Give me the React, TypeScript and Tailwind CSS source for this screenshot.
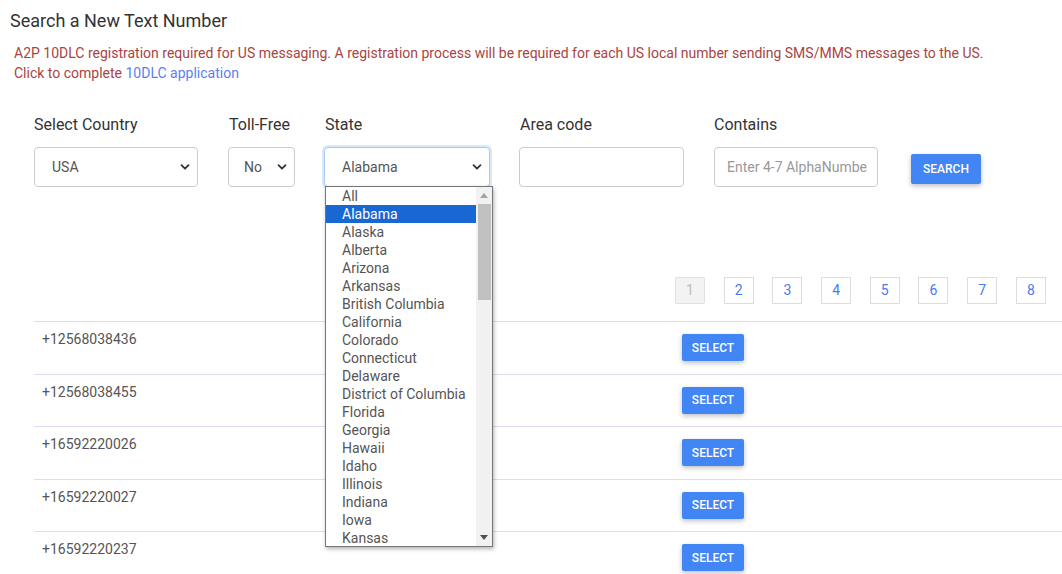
import React from 'react';

const states = [
  'All', 'Alabama', 'Alaska', 'Alberta', 'Arizona', 'Arkansas', 'British Columbia', 'California',
  'Colorado', 'Connecticut', 'Delaware', 'District of Columbia', 'Florida', 'Georgia', 'Hawaii',
  'Idaho', 'Illinois', 'Indiana', 'Iowa', 'Kansas',
];

const numbers = ['+12568038436', '+12568038455', '+16592220026', '+16592220027', '+16592220237'];

const Chevron: React.FC = () => (
  <svg className="w-[10px] h-[10px]" viewBox="0 0 10 10" fill="none">
    <path d="M1.5 3.2 5 6.7 8.5 3.2" stroke="#333" strokeWidth={1.8} strokeLinecap="round" strokeLinejoin="round" />
  </svg>
);

const FakeSelect: React.FC<{ value: string; width: string; focused?: boolean; pad?: string }> = ({ value, width, focused, pad = 'pl-[17px]' }) => (
  <div
    className={`${width} h-[40px] flex items-center justify-between ${pad} pr-[7px] rounded-[4px] bg-white text-[14px] text-[#555] border ${
      focused ? 'border-[#a9c8f5] shadow-[0_0_0_2px_rgba(150,190,245,0.35)]' : 'border-[#ccc]'
    }`}
  >
    <span>{value}</span>
    <Chevron />
  </div>
);

const App: React.FC = () => {
  return (
    <div className="w-[1062px] h-[574px] overflow-hidden bg-white relative" style={{ fontFamily: 'Roboto, "Liberation Sans", sans-serif' }}>
      <h1 className="pl-[10px] pt-[9px] text-[18px] leading-[24px] text-[#333] font-normal">Search a New Text Number</h1>

      <div className="pl-[14px] pt-[10px] text-[14px] leading-[20px] text-[#a94442]">
        <p>A2P 10DLC registration required for US messaging. A registration process will be required for each US local number sending SMS/MMS messages to the US.</p>
        <p>
          Click to complete <a className="text-[#5a7ff0]">10DLC application</a>
        </p>
      </div>

      {/* Search form */}
      <div className="flex items-start pl-[34px] pt-[32px]">
        <div className="w-[194px]">
          <div className="text-[16px] leading-[20px] text-[#333] mb-[12px]">Select Country</div>
          <FakeSelect value="USA" width="w-[164px]" />
        </div>
        <div className="w-[96px]">
          <div className="text-[16px] leading-[20px] text-[#333] mb-[12px] pl-[1px]">Toll-Free</div>
          <FakeSelect value="No" width="w-[67px]" pad="pl-[15px]" />
        </div>
        <div className="w-[195px] relative">
          <div className="text-[16px] leading-[20px] text-[#333] mb-[12px] pl-[1px]">State</div>
          <FakeSelect value="Alabama" width="w-[166px]" focused />
          {/* open listbox */}
          <div className="absolute left-[1px] top-[71px] w-[168px] h-[361px] bg-white border border-[#767676] shadow-[1px_2px_4px_rgba(0,0,0,0.3)] flex z-10">
            <div className="flex-1">
              {states.map((s) => (
                <div
                  key={s}
                  className={`h-[18px] leading-[18px] text-[14px] pl-[16px] ${
                    s === 'Alabama' ? 'bg-[#1967d2] text-white' : 'text-[#555]'
                  }`}
                >
                  {s}
                </div>
              ))}
            </div>
            <div className="w-[16px] bg-[#f1f1f1] flex flex-col items-center">
              <div className="h-[17px] flex items-center justify-center">
                <svg width="8" height="5" viewBox="0 0 8 5"><path d="M0 5 4 0 8 5Z" fill="#a3a3a3" /></svg>
              </div>
              <div className="w-[13px] h-[96px] bg-[#c1c1c1]" />
              <div className="flex-1" />
              <div className="h-[17px] flex items-center justify-center">
                <svg width="8" height="5" viewBox="0 0 8 5"><path d="M0 0 4 5 8 0Z" fill="#505050" /></svg>
              </div>
            </div>
          </div>
        </div>
        <div className="w-[195px]">
          <div className="text-[16px] leading-[20px] text-[#333] mb-[12px] pl-[1px]">Area code</div>
          <div className="w-[165px] h-[40px] rounded-[4px] border border-[#ccc] bg-white" />
        </div>
        <div className="w-[197px]">
          <div className="text-[16px] leading-[20px] text-[#333] mb-[12px]">Contains</div>
          <div className="w-[164px] h-[40px] rounded-[4px] border border-[#ccc] bg-white flex items-center pl-[12px] overflow-hidden whitespace-nowrap text-[14px] text-[#999]">
            Enter 4-7 AlphaNumbe
          </div>
        </div>
        <button className="mt-[39px] w-[70px] h-[30px] bg-[#4285f4] text-white text-[12px] font-medium rounded-[2px] shadow-[0_2px_5px_rgba(0,0,0,0.25)]">
          SEARCH
        </button>
      </div>

      {/* Pagination */}
      <div className="flex justify-start pl-[675px] pt-[90px] gap-[18.7px]">
        {[1, 2, 3, 4, 5, 6, 7, 8].map((n) => (
          <div
            key={n}
            className={`w-[30px] h-[27px] flex items-center justify-center text-[14px] border ${
              n === 1 ? 'bg-[#f3f3f3] border-[#e0e0e0] text-[#bbb] rounded-[2px]' : 'bg-white border-[#ddd] text-[#4a7bea]'
            }`}
          >
            {n}
          </div>
        ))}
      </div>

      {/* Results */}
      <div className="ml-[34px] mt-[17px]">
        {numbers.map((num) => (
          <div key={num} className="h-[52.5px] border-t border-[#dcdcf5] flex items-start">
            <div className="w-[648px] pl-[8px] pt-[8px] text-[14px] leading-[18px] text-[#555]">{num}</div>
            <button className="mt-[12px] w-[62px] h-[27px] bg-[#4285f4] text-white text-[12px] font-medium rounded-[2px] shadow-[0_2px_5px_rgba(0,0,0,0.25)]">
              SELECT
            </button>
          </div>
        ))}
      </div>
    </div>
  );
};

export default App;
